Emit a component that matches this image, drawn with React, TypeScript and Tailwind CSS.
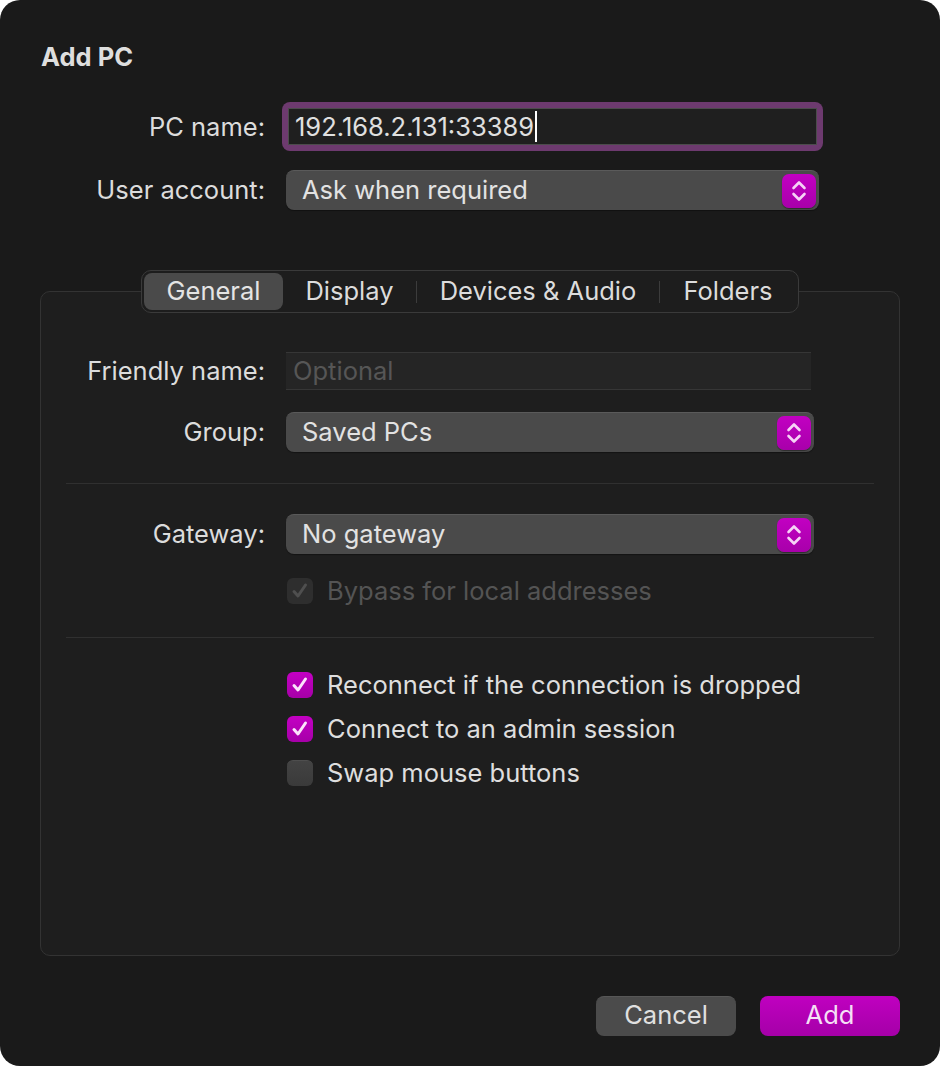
import React from 'react';

const font = { fontFamily: 'Inter, "Noto Sans", sans-serif' };

function Stepper() {
  return (
    <span className="flex h-[34px] w-[34px] items-center justify-center rounded-[7px] bg-gradient-to-b from-[#c200c2] to-[#a800aa] shadow-[0_1px_1px_rgba(0,0,0,0.4)]">
      <svg width="16" height="26" viewBox="0 0 16 26" fill="none" stroke="#f6d2f6" strokeWidth="2.6" strokeLinecap="round" strokeLinejoin="round">
        <path d="M2.5 10 L8 4.5 L13.5 10" />
        <path d="M2.5 16 L8 21.5 L13.5 16" />
      </svg>
    </span>
  );
}

function Popup({ value, width }: { value: string; width: string }) {
  return (
    <div className={`flex h-[40px] ${width} items-center justify-between rounded-[8px] border-t border-[#5a5a5a] bg-[#4a4a4a] pl-[16px] pr-[3px] shadow-[0_1px_1px_rgba(0,0,0,0.35)]`}>
      <span className="-mt-[2px] text-[#e2e2e2]">{value}</span>
      <Stepper />
    </div>
  );
}

function Check({ checked, disabled }: { checked?: boolean; disabled?: boolean }) {
  const base = 'flex h-[26px] w-[26px] shrink-0 items-center justify-center rounded-[6px]';
  if (disabled)
    return (
      <span className={`${base} bg-[#2e2e2e]`}>
        <svg width="20" height="20" viewBox="0 0 20 20" fill="none" stroke="#4f4f4f" strokeWidth="3" strokeLinecap="round" strokeLinejoin="round">
          <path d="M4 10.5 L8 15 L15.5 4" />
        </svg>
      </span>
    );
  if (checked)
    return (
      <span className={`${base} bg-gradient-to-b from-[#c400c4] to-[#a600a8]`}>
        <svg width="20" height="20" viewBox="0 0 20 20" fill="none" stroke="#fbe4fb" strokeWidth="3" strokeLinecap="round" strokeLinejoin="round">
          <path d="M4 10.5 L8 15 L15.5 4" />
        </svg>
      </span>
    );
  return <span className={`${base} border-t border-[#4e4e4e] bg-gradient-to-b from-[#434343] to-[#3a3a3a]`} />;
}

function Row({ label, children }: { label: string; children: React.ReactNode }) {
  return (
    <div className="flex items-center">
      <span className="w-[224px] shrink-0 text-right text-[#dcdcdc]">{label}</span>
      <div className="ml-[21px]">{children}</div>
    </div>
  );
}

const tabs = [
  { name: 'General', w: 'w-[139px]' },
  { name: 'Display', w: 'w-[133px]' },
  { name: 'Devices & Audio', w: 'w-[242px]' },
  { name: 'Folders', w: 'w-[136px]' },
];

export default function App() {
  return (
    <div className="h-[1066px] w-[940px] bg-white text-[25.5px] leading-[32px]" style={font}>
      <div className="flex h-full w-full flex-col rounded-[20px] bg-[#1a1a1a] px-[40px] pt-[41px]">
        <h1 className="pl-px font-bold text-[#dedede]">Add PC</h1>

        {/* top form */}
        <div className="mt-[29px] flex items-center">
          <span className="w-[225px] text-right text-[#dcdcdc]">PC name:</span>
          <div className="ml-[17px] rounded-[8px] bg-[#6d3a6f] p-[6px]">
            <div className="flex h-[37px] w-[529px] items-center border border-[#4c4c4c] bg-[#1f1f1f] pl-[6px]">
              <span className="text-[#e0e0e0]">192.168.2.131:33389</span>
              <span className="ml-px h-[31px] w-[2px] bg-white" />
            </div>
          </div>
        </div>
        <div className="mt-[19px] flex items-center">
          <span className="w-[225px] text-right text-[#dcdcdc]">User account:</span>
          <div className="ml-[21px]">
            <Popup value="Ask when required" width="w-[533px]" />
          </div>
        </div>

        {/* tab box */}
        <div className="mt-[81px] flex h-[665px] flex-col rounded-[10px] border border-[#333333] bg-[#1e1e1e]">
          <div className="-mt-[22px] flex justify-center">
            <div className="flex h-[43px] items-center rounded-[10px] border border-[#3a3a3a] bg-[#1d1d1d] p-[2px]">
              {tabs.map((t, i) => (
                <React.Fragment key={t.name}>
                  {i > 1 && <span className="h-[22px] w-px bg-[#3c3c3c]" />}
                  <span
                    className={
                      i === 0
                        ? `flex h-[37px] ${t.w} items-center justify-center rounded-[8px] bg-[#4a4a4a] text-[#e4e4e4]`
                        : `flex h-[37px] ${t.w} items-center justify-center text-[#dcdcdc]`
                    }
                  >
                    <span className="-mt-[2px]">{t.name}</span>
                  </span>
                </React.Fragment>
              ))}
            </div>
          </div>

          <div className="mt-[39px]">
            <Row label="Friendly name:">
              <div className="flex h-[38px] w-[525px] items-center border-t border-b border-[#363636] bg-[#252525] pl-[7px] text-[#565656]">
                Optional
              </div>
            </Row>
          </div>
          <div className="mt-[22px]">
            <Row label="Group:">
              <Popup value="Saved PCs" width="w-[528px]" />
            </Row>
          </div>

          <div className="mx-[25px] mt-[31px] h-px bg-[#303030]" />

          <div className="mt-[30px]">
            <Row label="Gateway:">
              <Popup value="No gateway" width="w-[528px]" />
            </Row>
          </div>
          <div className="mt-[21px] flex items-center pl-[246px]">
            <Check disabled />
            <span className="ml-[14px] text-[#545454]">Bypass for local addresses</span>
          </div>

          <div className="mx-[25px] mt-[30px] h-px bg-[#303030]" />

          <div className="mt-[31px] flex flex-col gap-[12px] pl-[246px]">
            {[
              ['Reconnect if the connection is dropped', true],
              ['Connect to an admin session', true],
              ['Swap mouse buttons', false],
            ].map(([label, on]) => (
              <div key={label as string} className="flex items-center">
                <Check checked={on as boolean} />
                <span className="ml-[14px] text-[#dedede]">{label as string}</span>
              </div>
            ))}
          </div>
        </div>

        {/* footer */}
        <div className="mt-[40px] flex justify-end gap-[24px]">
          <button className="h-[40px] w-[140px] rounded-[8px] border-t border-[#575757] bg-[#4b4b4b] pb-[3px] text-[#e0e0e0]">Cancel</button>
          <button className="h-[40px] w-[140px] rounded-[8px] bg-gradient-to-b from-[#c000c0] to-[#a500a8] pb-[3px] text-[#f5dff5]">Add</button>
        </div>
      </div>
    </div>
  );
}
